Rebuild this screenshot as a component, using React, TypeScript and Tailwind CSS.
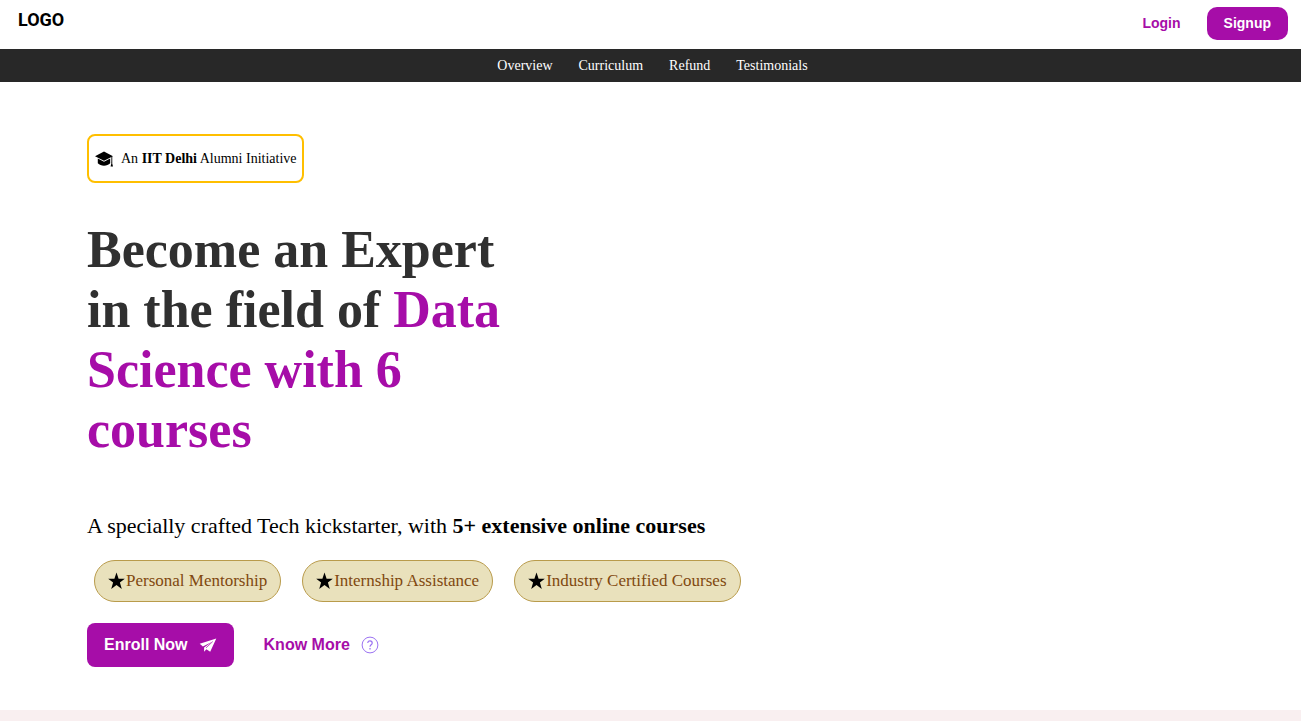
import React from "react";

const navLinks = ["Overview", "Curriculum", "Refund", "Testimonials"];
const perks = ["Personal Mentorship", "Internship Assistance", "Industry Certified Courses"];

function GraduationCap() {
  return (
    <svg viewBox="0 0 20 18" className="h-[18px] w-5 shrink-0" aria-hidden="true">
      <path d="M10 1.600 19 6.200 10 10.800 1 6.200Z" fill="#000" />
      <path d="M3.800 8.600 10 11.800 16.200 8.600v4.700c-1.500 1.600-3.800 2.500-6.200 2.500s-4.700-.9-6.200-2.500Z" fill="#000" />
      <path d="M17.800 6.800v6" stroke="#000" strokeWidth=".9" fill="none" />
      <path d="M17.800 11.600l1.200 4.800h-2.400Z" fill="#000" />
    </svg>
  );
}

function Star() {
  return (
    <svg viewBox="0 0 18 18" className="size-[18px] shrink-0" aria-hidden="true">
      <path d="M8.500 .6 10.600 6.700h6.200l-4.900 3.900 1.900 6.300-5.300-3.800-5.300 3.800 1.900-6.300L.2 6.700h6.200Z" fill="#000" />
    </svg>
  );
}

function PaperPlane() {
  return (
    <svg viewBox="0 0 18 16" className="h-4 w-[18px] shrink-0" aria-hidden="true">
      <path d="M17.300 1.500 .7 6.800l3.200 2.700L13.200 4.800 5.100 10.400v4.300l2.300-2.500 3.800 2.600Z" fill="#fff" />
      <path d="M13.800 4.500 7 10.900" stroke="#a60da8" strokeWidth=".7" fill="none" />
    </svg>
  );
}

function QuestionCircle() {
  return (
    <svg viewBox="0 0 18 18" className="size-[18px] shrink-0" fill="none" stroke="#9b72f2" aria-hidden="true">
      <circle cx="9" cy="9" r="7.900" strokeWidth="1" />
      <path d="M6.800 7.100C6.800 5.600 7.700 4.800 9 4.800s2.200.8 2.200 2.100c0 1.800-2.200 2-2.200 3.900" strokeWidth="1.200" />
      <path d="M9 12v1.400" strokeWidth="1.300" />
    </svg>
  );
}

export default function App() {
  return (
    <div className="bg-white font-['Liberation_Serif',serif] text-black">
      <header>
        <div className="flex h-[49px] items-start justify-between pr-[13px] pl-[18px]">
          <a href="#" className="pt-2 font-['Roboto',sans-serif] text-lg leading-6 font-bold">
            LOGO
          </a>
          <div className="flex items-center gap-[26px] pt-[7px] font-['Liberation_Sans',sans-serif] text-sm font-bold">
            <button type="button" className="pb-0.5 text-[#a60da8]">Login</button>
            <button type="button" className="h-[33px] rounded-[10px] bg-[#a60da8] px-[17px] pb-0.5 text-white">
              Signup
            </button>
          </div>
        </div>
        <nav className="flex h-[33px] items-center justify-center gap-[26px] bg-[#282828] pl-1 text-sm text-white">
          {navLinks.map((label) => (
            <a key={label} href={`#${label.toLowerCase()}`}>{label}</a>
          ))}
        </nav>
      </header>

      <main className="flex flex-col items-start px-[87px] pt-[52px] pb-[43px]">
        <div className="flex h-[49px] items-center gap-[7px] rounded-lg border-2 border-[#ffbf00] px-[5px] text-sm">
          <GraduationCap />
          <p>
            An <b>IIT Delhi</b> Alumni Initiative
          </p>
        </div>

        <h1 className="mt-[37px] max-w-[440px] text-[52px] leading-[60px] font-bold text-[#303030]">
          Become an Expert in the field of <span className="text-[#a60da8]">Data Science with 6 courses</span>
        </h1>

        <p className="mt-[52px] text-[22px] leading-7">
          A specially crafted Tech kickstarter, with <b>5+ extensive online courses</b>
        </p>

        <ul className="mt-5 flex flex-wrap gap-[21px] pl-[7px]">
          {perks.map((perk) => (
            <li
              key={perk}
              className="flex h-[42px] items-center rounded-full border border-[#b99b4b] bg-[#e9e1bc] px-[13px] text-[17px] text-[#80480f]"
            >
              <Star />
              {perk}
            </li>
          ))}
        </ul>

        <div className="mt-[21px] flex items-center gap-[30px] font-['Liberation_Sans',sans-serif] text-base font-bold">
          <button type="button" className="flex h-11 items-center gap-[11px] rounded-lg bg-[#a60da8] px-[17px] text-white">
            Enroll Now
            <PaperPlane />
          </button>
          <button type="button" className="flex items-center gap-[11px] text-[#a60da8]">
            Know More
            <QuestionCircle />
          </button>
        </div>
      </main>

      <section className="h-[11px] bg-[#f9eff0]" />
    </div>
  );
}
